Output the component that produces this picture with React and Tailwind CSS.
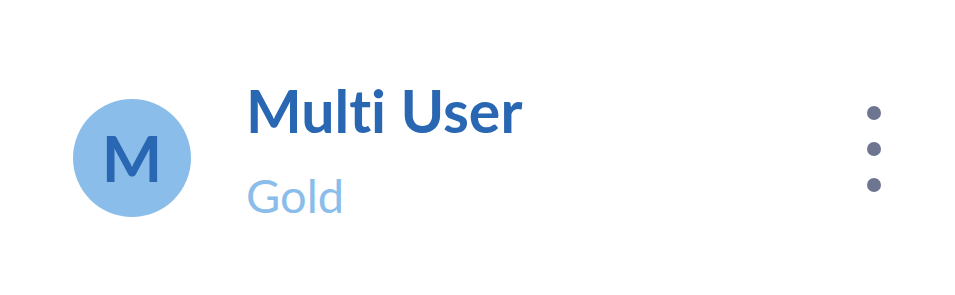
export default function App() {
  return (
    <div className="flex h-[295px] w-[955px] items-start bg-white pl-[73px] pr-[74px] pt-[80px] [font-variant-ligatures:none]" style={{ fontFamily: "Lato, 'Open Sans', sans-serif" }}>
      <div className="mt-[19px] flex h-[118px] w-[118px] shrink-0 items-center justify-center rounded-full bg-[#8abde9]">
        <span className="text-[64px] font-bold leading-none text-[#2967b2]">M</span>
      </div>
      <div className="ml-[55px] flex flex-1 flex-col">
        <span className="mt-[1px] text-[59px] font-bold leading-[60px] text-[#2967b2]">Multi User</span>
        <span className="mt-[29px] text-[47px] leading-[50px] text-[#8abde9]">Gold</span>
      </div>
      <div className="mt-[26px] flex flex-col items-center gap-[22px]">
        <span className="h-[14px] w-[14px] rounded-full bg-[#6e7590]" />
        <span className="h-[14px] w-[14px] rounded-full bg-[#6e7590]" />
        <span className="h-[14px] w-[14px] rounded-full bg-[#6e7590]" />
      </div>
    </div>
  );
}
